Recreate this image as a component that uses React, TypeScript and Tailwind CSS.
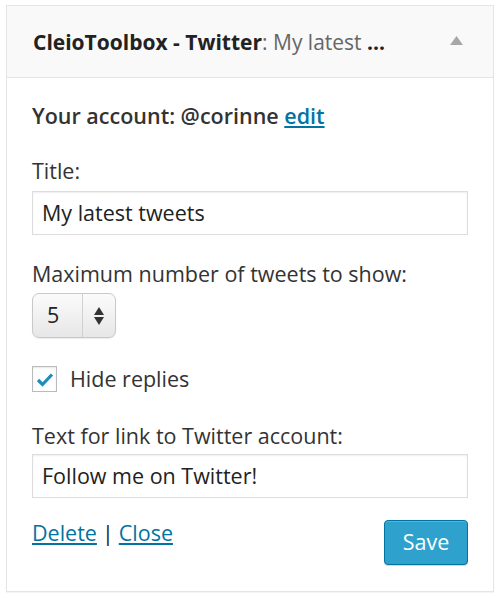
export default function App() {
  return (
    <div className="min-h-[598px] bg-white pl-[6px] pt-[5px] font-['Open_Sans',sans-serif] text-[21.5px] text-[#333]">
      <div className="w-[488px] h-[587px] border border-[#e5e5e5] bg-white shadow-[0_1px_1px_rgba(0,0,0,0.04)]">
        {/* Header */}
        <div className="flex h-[72px] items-center justify-between border-b border-[#e5e5e5] bg-[#f9f9f9] pl-[26px] pr-[30px]">
          <h3 className="text-[21px] font-bold leading-7 text-[#222] whitespace-nowrap">
            CleioToolbox - Twitter<span className="font-normal text-[#666]">: My latest </span>...
          </h3>
          <svg width="13" height="9" viewBox="0 0 13 9" className="mt-[-2px]">
            <polygon points="6.5,0 13,9 0,9" fill="#a7a7a7" />
          </svg>
        </div>

        {/* Body */}
        <div className="px-[25px] pt-[24px]">
          <p className="font-semibold leading-7 text-[#333]">
            Your account: @corinne{" "}
            <a href="#" className="text-[#0074a2] underline">edit</a>
          </p>

          <label className="mt-[27px] block leading-7">Title:</label>
          <div className="mt-[6px] flex h-[44px] items-center border border-[#dddddd] bg-white px-[9px] text-[#222] shadow-[inset_0_1px_2px_rgba(0,0,0,0.07)]">
            My latest tweets
          </div>

          <label className="mt-[25px] block leading-7">Maximum number of tweets to show:</label>
          <div className="mt-[5px] flex h-[45px] w-[84px] items-stretch rounded-[7px] border border-[#c8c8c8] bg-gradient-to-b from-[#fbfbfb] via-[#f1f1f1] to-[#e6e6e6] text-[#222] shadow-[0_1px_1px_rgba(0,0,0,0.08)]">
            <span className="flex w-[49px] items-center pl-[14px]">5</span>
            <span className="w-px bg-[#d0d0d0]" />
            <span className="flex flex-1 flex-col items-center justify-center gap-[2px]">
              <svg width="10" height="8" viewBox="0 0 10 8">
                <polygon points="5,0 10,8 0,8" fill="#333" />
              </svg>
              <svg width="10" height="8" viewBox="0 0 10 8">
                <polygon points="0,0 10,0 5,8" fill="#333" />
              </svg>
            </span>
          </div>

          <div className="mt-[27px] flex items-center gap-[13px] leading-7">
            <span className="flex h-[26px] w-[25px] items-center justify-center border border-[#bbbbbb] bg-white shadow-[inset_0_1px_2px_rgba(0,0,0,0.1)]">
              <svg width="18" height="15" viewBox="0 0 18 15">
                <path d="M2 8 L6.5 12.5 L16 2.5" fill="none" stroke="#1e8cbe" strokeWidth="3.2" />
              </svg>
            </span>
            <span>Hide replies</span>
          </div>

          <label className="mt-[29px] block leading-7">Text for link to Twitter account:</label>
          <div className="mt-[4px] flex h-[44px] items-center border border-[#dddddd] bg-white px-[9px] text-[#222] shadow-[inset_0_1px_2px_rgba(0,0,0,0.07)]">
            Follow me on Twitter!
          </div>

          <div className="mt-[22px] flex items-start justify-between">
            <div className="mt-[-1px] leading-7 text-[#222]">
              <a href="#" className="text-[#0074a2] underline">Delete</a>
              <span className="mx-[5px]">|</span>
              <a href="#" className="text-[#0074a2] underline">Close</a>
            </div>
            <button className="h-[45px] w-[84px] rounded-[4px] border border-[#0074a2] bg-[#2ea2cc] text-white shadow-[inset_0_1px_0_rgba(120,200,230,0.5),0_1px_0_rgba(0,0,0,0.15)]">
              Save
            </button>
          </div>
        </div>
      </div>
    </div>
  );
}
